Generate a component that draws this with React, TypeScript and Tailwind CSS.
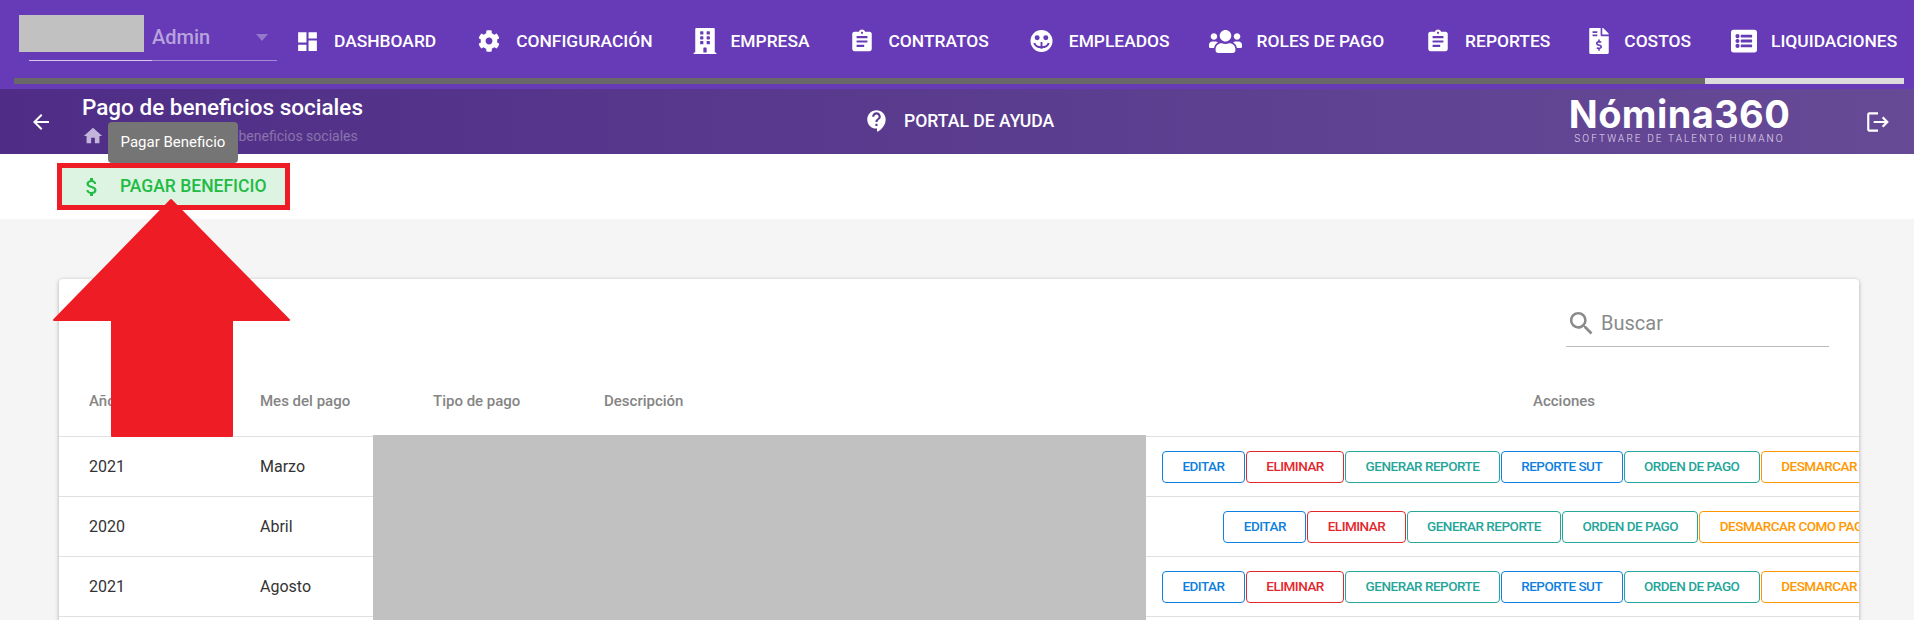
import { ReactNode } from 'react';
import { FaBuilding, FaCog, FaFileInvoiceDollar, FaListAlt, FaUsers } from 'react-icons/fa';
import {
  MdArrowBack,
  MdAssignment,
  MdAttachMoney,
  MdContactSupport,
  MdDashboard,
  MdHome,
  MdLogout,
  MdSearch,
} from 'react-icons/md';

function EmployeesIcon() {
  return (
    <svg width="23" height="24" viewBox="0 0 24 24">
      <circle cx="12" cy="12" r="11.5" fill="white" />
      <circle cx="7.5" cy="8.5" r="2.6" fill="#673ab7" />
      <circle cx="16.5" cy="8.5" r="2.6" fill="#673ab7" />
      <path d="M4.5 14 C6 20 18 20 19.5 14" fill="none" stroke="#673ab7" strokeWidth="2" />
      <path d="M12 13 V20" fill="none" stroke="#673ab7" strokeWidth="2" />
    </svg>
  );
}

// widths and gaps differ a little per item, as the icons are not all the same size
const navItems: { label: string; icon: ReactNode; cls: string; box: string }[] = [
  { label: 'DASHBOARD', icon: <MdDashboard size={25} />, cls: 'gap-[14px]', box: 'w-[26px]' },
  { label: 'CONFIGURACIÓN', icon: <FaCog size={22} />, cls: 'ml-[1px] gap-[14px]', box: 'w-[26px]' },
  { label: 'EMPRESA', icon: <FaBuilding size={26} />, cls: 'gap-[13px]', box: 'w-[26px]' },
  { label: 'CONTRATOS', icon: <MdAssignment size={27} />, cls: 'gap-[14px]', box: 'w-[26px]' },
  { label: 'EMPLEADOS', icon: <EmployeesIcon />, cls: 'ml-[1px] gap-[14px]', box: 'w-[26px]' },
  { label: 'ROLES DE PAGO', icon: <FaUsers size={33} />, cls: 'gap-[14px]', box: 'w-[34px]' },
  { label: 'REPORTES', icon: <MdAssignment size={27} />, cls: 'ml-[2px] gap-[14px]', box: 'w-[26px]' },
  { label: 'COSTOS', icon: <FaFileInvoiceDollar size={26} />, cls: '-ml-[3px] gap-[12px]', box: 'w-[26px]' },
  { label: 'LIQUIDACIONES', icon: <FaListAlt size={26} />, cls: 'ml-[1px] gap-[14px]', box: 'w-[26px]' },
];

const BLUE = 'border-[#0f7fe0] text-[#0f7fe0]';
const RED = 'border-[#e3282d] text-[#e3282d]';
const TEAL = 'border-[#26a69a] text-[#26a69a]';
const ORANGE = 'border-[#ff9800] text-[#ff9800]';

const fullActions = [
  { label: 'EDITAR', color: BLUE },
  { label: 'ELIMINAR', color: RED },
  { label: 'GENERAR REPORTE', color: TEAL },
  { label: 'REPORTE SUT', color: BLUE },
  { label: 'ORDEN DE PAGO', color: TEAL },
  { label: 'DESMARCAR COMO PAGADO', color: ORANGE },
];

const shortActions = fullActions.filter((a) => a.label !== 'REPORTE SUT');

const rows = [
  { year: '2021', month: 'Marzo', actions: fullActions },
  { year: '2020', month: 'Abril', actions: shortActions },
  { year: '2021', month: 'Agosto', actions: fullActions },
];

export default function App() {
  return (
    <div className="relative h-[620px] w-[1914px] overflow-hidden bg-[#f5f5f5] font-['Roboto',sans-serif]">
      <header className="h-[89px] bg-[#673ab7] text-white">
        <div className="flex h-[78px] items-start">
          <div className="ml-[19px] mt-[15px] w-[258px] shrink-0">
            <div className="flex items-start">
              <div className="h-[37px] w-[125px] bg-[#c1c1c1]" />
              <span className="ml-2 mt-[10px] text-[20px] font-medium leading-6 text-[#b7a3dd]">Admin</span>
              <span className="ml-auto mr-[9px] mt-[19px] h-0 w-0 border-x-[6px] border-t-[7px] border-x-transparent border-t-[#9478c9]" />
            </div>
            <div className="ml-[10px] mt-[8px] flex h-px">
              <div className="w-[123px] bg-[#d5c9ea]" />
              <div className="flex-1 bg-[#a48ad2]" />
            </div>
          </div>
          <nav className="ml-[17px] mt-[28px] flex items-center gap-[39px]">
            {navItems.map((item) => (
              <div key={item.label} className={`flex h-[26px] items-center ${item.cls}`}>
                <span className={`flex justify-center ${item.box}`}>{item.icon}</span>
                <span className="text-[17.4px] font-medium whitespace-nowrap">{item.label}</span>
              </div>
            ))}
          </nav>
        </div>
        <div className="ml-[14px] flex h-[6px] w-[1890px] bg-[#dcdcdc]">
          <div className="h-full w-[1691px] bg-[#686868]" />
        </div>
      </header>

      <div className="flex h-[65px] items-center bg-gradient-to-r from-[#4f2d87] to-[#664a96] text-white">
        <MdArrowBack size={24} className="ml-[29px] shrink-0" />
        <div className="mb-[2px] ml-[29px] w-[400px]">
          <div className="mb-[5px] text-[22.5px] font-medium leading-[26px] whitespace-nowrap">Pago de beneficios sociales</div>
          <div className="flex h-[22px] items-center text-sm text-[#8a74ad]">
            <MdHome size={22} className="text-[#c3b5da]" />
            <span className="ml-[80px] whitespace-nowrap">Pago de beneficios sociales</span>
          </div>
        </div>
        <div className="ml-[382px] flex items-center gap-[14px]">
          <MdContactSupport size={26} />
          <span className="text-[17.6px] font-medium">PORTAL DE AYUDA</span>
        </div>
        <div className="ml-auto mr-[23px] flex items-center gap-[75px]">
          <div className="mb-[3px] flex w-[221px] flex-col items-center">
            <span className="font-['Inter',sans-serif] text-[38px] leading-[38px] font-bold tracking-[0.4px] whitespace-nowrap">Nómina360</span>
            <span className="text-[10px] leading-3 font-light tracking-[2.1px] whitespace-nowrap text-[#e4deef]">SOFTWARE DE TALENTO HUMANO</span>
          </div>
          <MdLogout size={26} />
        </div>
      </div>

      <div className="h-[65px] bg-white pl-[57px] pt-[9px]">
        <button className="flex h-[47px] w-[233px] items-center gap-[16px] border-[5px] border-[#ee1c25] bg-[#ddf4e3] pl-[18px] text-[17.5px] font-medium whitespace-nowrap text-[#22bb44]">
          <MdAttachMoney size={24} />
          PAGAR BENEFICIO
        </button>
      </div>

      <main className="ml-[59px] mt-[60px] h-[400px] w-[1800px] overflow-hidden rounded bg-white shadow-[0_1px_4px_rgba(0,0,0,0.3)]">
        <div className="flex h-[68px] items-end justify-end pr-[30px]">
          <div className="flex h-[40px] w-[263px] items-center gap-[4px] border-b border-[#bbbbbb] pb-[7px] text-[#8a8a8a]">
            <MdSearch size={31} />
            <span className="text-[20px]">Buscar</span>
          </div>
        </div>
        <div className="flex h-[90px] items-center border-b border-[#e0e0e0] pt-[20px] text-[15px] font-medium text-[#858585]">
          <div className="w-[201px] shrink-0 pl-[30px]">Año del pago</div>
          <div className="w-[173px] shrink-0">Mes del pago</div>
          <div className="w-[171px] shrink-0">Tipo de pago</div>
          <div className="w-[542px] shrink-0">Descripción</div>
          <div className="w-[836px] shrink-0 text-center">Acciones</div>
        </div>
        {rows.map((row, i) => (
          <div key={i} className="flex h-[60px] items-center border-b border-[#e0e0e0] text-base text-[#333333]">
            <div className="w-[201px] shrink-0 pl-[30px]">{row.year}</div>
            <div className="w-[173px] shrink-0">{row.month}</div>
            <div className="w-[713px] shrink-0" />
            <div className="flex w-[836px] shrink-0 justify-center gap-[1px] pl-[4px]">
              {row.actions.map((a) => (
                <button
                  key={a.label}
                  className={`h-8 shrink-0 rounded border px-[19.4px] text-[13.5px] font-medium tracking-[-0.5px] whitespace-nowrap ${a.color}`}
                >
                  {a.label}
                </button>
              ))}
            </div>
          </div>
        ))}
      </main>

      {/* redaction block over the table */}
      <div className="absolute left-[373px] top-[435px] h-[185px] w-[773px] bg-[#c1c1c1]" />

      {/* annotation arrow pointing at the button */}
      <svg className="absolute left-[50px] top-[198px]" width="244" height="240" viewBox="50 198 244 240">
        <path
          d="M171 200 L289 320 L232 320 L232 436 L112 436 L112 320 L54 320 Z"
          fill="#ee1c25"
          stroke="#ee1c25"
          strokeWidth="2"
          strokeLinejoin="round"
        />
      </svg>

      {/* tooltip */}
      <div className="absolute left-[108px] top-[122px] flex h-[41px] w-[130px] items-center justify-center rounded bg-[#757575] text-[15px] text-white">
        Pagar Beneficio
      </div>
    </div>
  );
}
